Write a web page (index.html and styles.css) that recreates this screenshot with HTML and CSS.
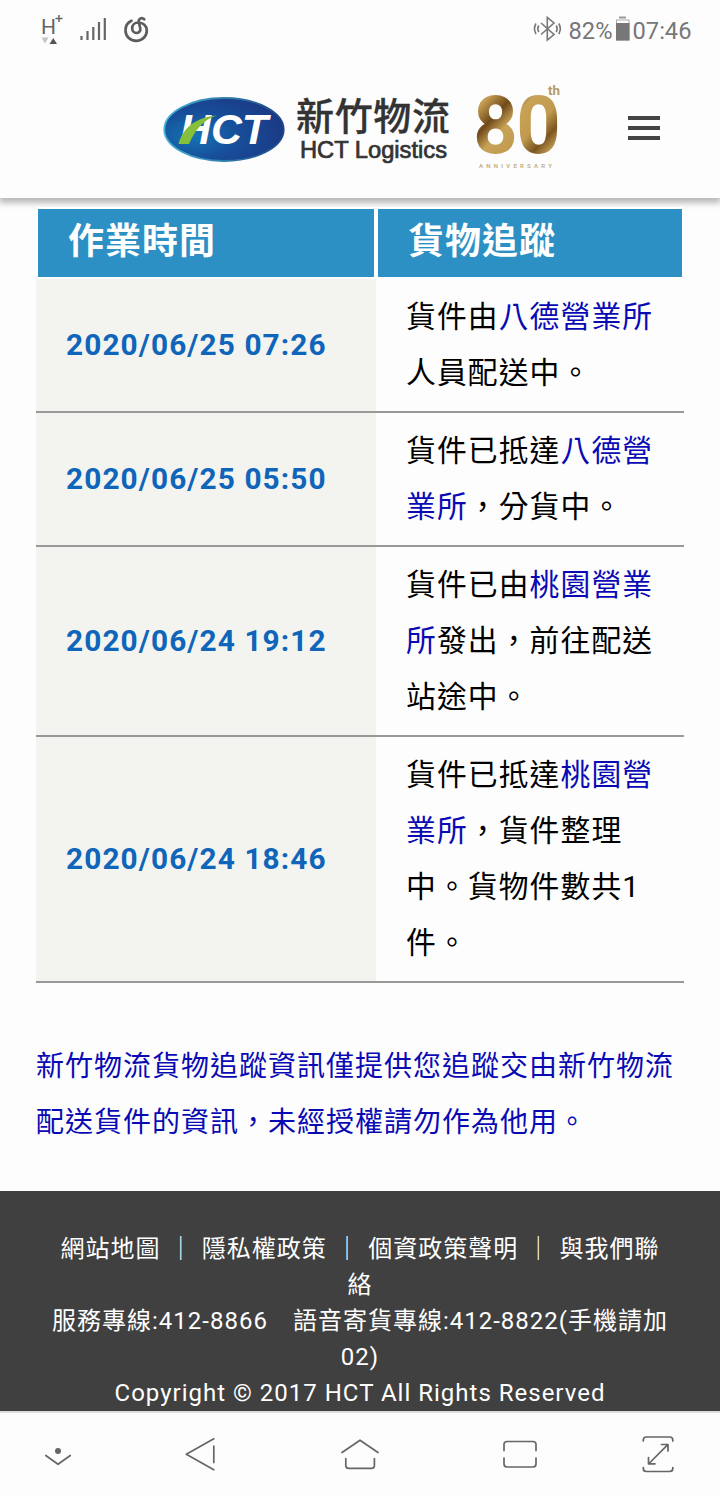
FILE: index.html
```html
<!DOCTYPE html>
<html lang="zh-Hant">
<head>
<meta charset="UTF-8">
<title>新竹物流 貨物追蹤</title>
<link rel="stylesheet" href="styles.css">
</head>
<body>
<div class="status-bar">
    <svg class="status-left" width="160" height="60" viewBox="0 0 160 60">
        <text x="41" y="33.500" font-size="20" textLength="15" lengthAdjust="spacingAndGlyphs" fill="#666">H</text>
        <path d="M55.500 18.500h7M59 15v7" stroke="#666" stroke-width="1.500"/>
        <path d="M41.500 37.500h7l-3.500 6z" fill="#c4c4c4"/>
        <path d="M49.500 44h7.500l-3.700-6z" fill="#555"/>
        <path d="M81.500 36v4M87.500 31v9M93.300 27v13M99 22v18M104.800 18v22" stroke="#666" stroke-width="2.200"/>
        <path d="M131.500 20.800c-3.700 1.700-6 5.200-6 9.400 0 6 4.500 10.600 10.700 10.600s10.600-4.800 10.600-10.300c0-4.700-3.800-8-8.300-8-4 0-6.300 2.500-6.300 5.800 0 2.800 1.900 4.700 4.200 4.700s4.300-1.900 3.900-4.500l-1.500-6.500c-.6-3 2.700-5.200 5.400-2.700" fill="none" stroke="#5c5c5c" stroke-width="2.700" stroke-linecap="round"/>
    </svg>
    <svg class="status-right" width="200" height="60" viewBox="0 0 200 60">
        <g fill="none" stroke="#777" stroke-width="1.600">
            <path d="M21 23l13 11.500-6.700 5.500V17.500l6.700 5.500L21 34.500"/>
            <path d="M18.800 25.500q-2 3.300 0 6.500M16 23.500q-3 5 0 10.500M36.200 25.500q2 3.300 0 6.500M38.800 23.500q3 5 0 10.500"/>
        </g>
        <text x="48.500" y="38.500" font-size="24.500" textLength="44" lengthAdjust="spacingAndGlyphs" fill="#777">82%</text>
        <path d="M99 17.500h7" stroke="#999" stroke-width="2"/>
        <rect x="96.500" y="20" width="12.500" height="20" fill="#fff" stroke="#aaa" stroke-width="1"/>
        <rect x="96" y="23" width="13.500" height="17.500" fill="#777"/>
        <text x="112.500" y="38.500" font-size="24.500" textLength="59" lengthAdjust="spacingAndGlyphs" fill="#777">07:46</text>
    </svg>
</div>

<div class="header">
    <svg class="logo" width="290" height="80" viewBox="0 0 290 80">
        <defs>
            <radialGradient id="oval" cx="0.250" cy="0.600" r="0.850">
                <stop offset="0" stop-color="#1473b4"/>
                <stop offset="0.450" stop-color="#174d99"/>
                <stop offset="1" stop-color="#1c3580"/>
            </radialGradient>
            <linearGradient id="rim" x1="0" y1="0" x2="1" y2="0">
                <stop offset="0" stop-color="#45b3d5"/>
                <stop offset="1" stop-color="#1c4689"/>
            </linearGradient>
        </defs>
        <ellipse cx="64" cy="41.500" rx="59.700" ry="31.500" fill="url(#oval)" stroke="url(#rim)" stroke-width="1.800"/>
        <text class="logo-hct" x="20" y="56" textLength="88" lengthAdjust="spacingAndGlyphs">HCT</text>
        <path d="M18.500 56c4-14 14-26 38-28.500-14 5-21 14-27.500 28.500z" fill="#85bf3c"/>
        <text class="logo-zh" x="136" y="42" textLength="154">新竹物流</text>
        <text class="logo-en" x="140" y="70" textLength="147" lengthAdjust="spacingAndGlyphs">HCT Logistics</text>
    </svg>
    <svg class="anniversary" width="90" height="90" viewBox="0 0 90 90">
        <defs>
            <linearGradient id="gold" x1="0" y1="0" x2="1" y2="1">
                <stop offset="0" stop-color="#d0ad62"/>
                <stop offset="0.180" stop-color="#c29c50"/>
                <stop offset="0.320" stop-color="#70491a"/>
                <stop offset="0.440" stop-color="#c8a357"/>
                <stop offset="0.620" stop-color="#c09a4e"/>
                <stop offset="0.740" stop-color="#7b5520"/>
                <stop offset="0.860" stop-color="#d2ae62"/>
            </linearGradient>
        </defs>
        <text class="eighty" x="2" y="71.500" textLength="86" lengthAdjust="spacingAndGlyphs" fill="url(#gold)" stroke="url(#gold)">80</text>
        <text class="th" x="76" y="15" textLength="12" lengthAdjust="spacingAndGlyphs">th</text>
        <text class="anniv-label" x="7" y="87.500" textLength="73">ANNIVERSARY</text>
    </svg>
    <div class="menu">
        <span></span>
        <span></span>
        <span></span>
    </div>
</div>

<div class="content">
    <table class="tracking">
        <tr>
            <th class="time">作業時間</th>
            <th>貨物追蹤</th>
        </tr>
        <tr>
            <td class="time">2020/06/25 07:26</td>
            <td>貨件由<a>八德營業所</a><br>人員配送中。</td>
        </tr>
        <tr>
            <td class="time">2020/06/25 05:50</td>
            <td>貨件已抵達<a>八德營<br>業所</a>，分貨中。</td>
        </tr>
        <tr>
            <td class="time">2020/06/24 19:12</td>
            <td>貨件已由<a>桃園營業<br>所</a>發出，前往配送<br>站途中。</td>
        </tr>
        <tr>
            <td class="time">2020/06/24 18:46</td>
            <td>貨件已抵達<a>桃園營<br>業所</a>，貨件整理<br>中。貨物件數共1<br>件。</td>
        </tr>
    </table>
    <p class="note">新竹物流貨物追蹤資訊僅提供您追蹤交由新竹物流<br>配送貨件的資訊，未經授權請勿作為他用。</p>
</div>

<div class="footer">
    <div class="links">網站地圖 ｜ 隱私權政策 ｜ 個資政策聲明 ｜ 與我們聯<br>絡</div>
    <div>服務專線:412-8866　語音寄貨專線:412-8822(手機請加<br>02)</div>
    <div>Copyright © 2017 HCT All Rights Reserved</div>
</div>

<div class="nav-bar">
    <svg width="720" height="84" viewBox="0 1413 720 84">
        <g fill="none" stroke="#666" stroke-width="1.700" stroke-linecap="round" stroke-linejoin="round">
            <path d="M45.800 1455.500L58 1464.300l12.300-8.800"/>
            <circle cx="58" cy="1451" r="3" fill="#666" stroke="none"/>
            <path d="M213.800 1438.800L186.300 1454.300l27.500 15.500M213.800 1446v16.500"/>
            <path d="M342 1452.500l18-12.300 18 12.300M345.800 1458.500v7q0 2.800 2.800 2.800h23q2.800 0 2.800-2.800v-7"/>
            <path d="M504 1450.500v-6q0-3 3-3h26q3 0 3 3v6M504 1458v6q0 3 3 3h26q3 0 3-3v-6"/>
            <path d="M643.300 1441v-1q0-3 3-3h23.500q3 0 3 3v1M643.300 1467.500v1q0 3 3 3h23.500q3 0 3-3v-1"/>
            <path d="M649 1463.500l18.800-18.800M661.500 1444.500h6.500v6.500M648.500 1457.500v6.300h6.500"/>
        </g>
    </svg>
</div>
</body>
</html>
```
FILE: styles.css
```css
body, html {
    margin: 0;
    height: 1497px;
    overflow: hidden;
    font-family: Roboto, "Noto Sans CJK TC", sans-serif;
    background-color: #fdfdfd;
}
body {
    display: flex;
    flex-direction: column;
}
svg {
    overflow: visible;
}
.status-bar {
    display: flex;
    justify-content: space-between;
    height: 60px;
    flex: none;
    background: #fdfdfd;
    z-index: 1; /* keeps the header shadow off the bar */
}
.header {
    display: flex;
    height: 138px;
    flex: none;
    background: #fdfdfd;
    box-shadow: 0 4px 6px 1px rgba(0,0,0,0.27);
}
.logo {
    margin: 28px 0 0 160px;
}
.logo-hct {
    font: italic bold 43px "Liberation Sans", sans-serif;
    fill: #fff;
}
.logo-zh {
    font: 500 38px "Noto Sans CJK TC", sans-serif;
    fill: #333;
    stroke: #333;
    stroke-width: 0.3px;
}
.logo-en {
    font: 23px "Liberation Sans", sans-serif;
    fill: #333;
    stroke: #333;
    stroke-width: 0.7px;
}
.anniversary {
    margin: 20px 0 0 22px;
}
.eighty {
    font: 500 78px Roboto, sans-serif;
    stroke-width: 2px;
}
.th {
    font: bold 12px Roboto, sans-serif;
    fill: #b59a68;
}
.anniv-label {
    font: bold 6px Roboto, sans-serif;
    fill: #c5b087;
}
.menu {
    display: flex;
    flex-direction: column;
    gap: 6px;
    margin: 56px 0 0 66px;
}
.menu span {
    width: 32px;
    height: 4px;
    background: #444;
}
.content {
    height: 993px;
    flex: none;
    padding: 9px 36px 0;
    box-sizing: border-box;
}
.tracking {
    width: 648px;
    border-collapse: separate;
    border-spacing: 0;
    table-layout: fixed;
}
.tracking th {
    height: 68px;
    padding: 0 30px;
    border: 2px solid #fff;
    background: #2d90c4;
    color: #fff;
    font-size: 36px;
    letter-spacing: 1px;
    line-height: 67px;
    text-align: left;
    vertical-align: top;
    box-sizing: content-box;
}
.tracking td {
    padding: 10px 0 10px 30px;
    border-bottom: 2px solid #999;
    color: #000;
    font-size: 29.8px;
    letter-spacing: 1.1px;
    line-height: 56px;
    white-space: nowrap;
}
.tracking th.time {
    width: 276px;
}
.tracking td.time {
    background: #f3f4f0;
    color: #0f65b9;
    font-weight: bold;
}
.tracking a {
    color: #0a0ab4;
}
.note {
    margin: 56px 0 0;
    color: #0a0ab4;
    font-size: 28px;
    letter-spacing: 1px;
    line-height: 56px;
    white-space: nowrap;
}
.footer {
    height: 220px;
    flex: none;
    padding-top: 40px;
    box-sizing: border-box;
    overflow: hidden;
    background: #404040;
    color: #fff;
    font-size: 24px;
    letter-spacing: 1px;
    line-height: 36px;
    text-align: center;
    white-space: nowrap;
}
.footer .links {
    word-spacing: 1.2px;
}
.nav-bar {
    flex: none;
    height: 84px;
    background: #fdfdfd;
    border-top: 2px solid #ddd;
}
```
